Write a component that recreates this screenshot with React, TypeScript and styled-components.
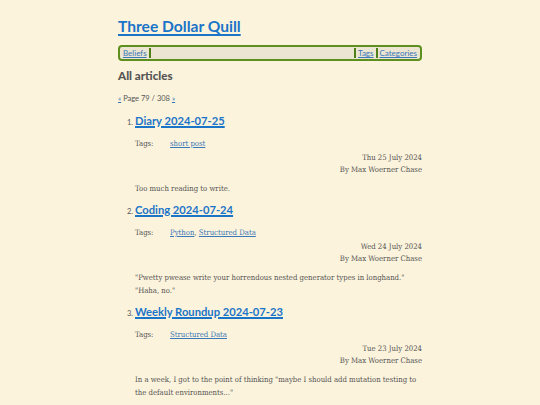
import { FC } from "react";
import styled, { createGlobalStyle } from "styled-components";

const GlobalStyle = createGlobalStyle`
  html, body {
    margin: 0;
    padding: 0;
    background: #fcf3dc;
  }
`;

interface Article {
  title: string;
  tags: string[];
  date: string;
  body: string[];
}

const articles: Article[] = [
  {
    title: "Diary 2024-07-25",
    tags: ["short post"],
    date: "Thu 25 July 2024",
    body: ["Too much reading to write."],
  },
  {
    title: "Coding 2024-07-24",
    tags: ["Python", "Structured Data"],
    date: "Wed 24 July 2024",
    body: [
      "\"Pwetty pwease write your horrendous nested generator types in longhand.\"",
      "\"Haha, no.\"",
    ],
  },
  {
    title: "Weekly Roundup 2024-07-23",
    tags: ["Structured Data"],
    date: "Tue 23 July 2024",
    body: [
      "In a week, I got to the point of thinking \"maybe I should add mutation testing to the default environments...\"",
    ],
  },
];

const App: FC = () => {
  return (
    <>
      <GlobalStyle />
      <Page>
        <SiteTitle href="#">Three Dollar Quill</SiteTitle>
        <Nav>
          <NavLink href="#">Beliefs</NavLink>
          <Sep />
          <Spacer />
          <Sep />
          <NavLink href="#">Tags</NavLink>
          <Sep />
          <NavLink href="#">Categories</NavLink>
        </Nav>
        <Heading>All articles</Heading>
        <Pager>
          <SmallLink href="#">«</SmallLink> Page 79 / 308{" "}
          <SmallLink href="#">»</SmallLink>
        </Pager>
        <List>
          {articles.map((a) => (
            <Item key={a.title}>
              <ItemTitle href="#">{a.title}</ItemTitle>
              <TagRow>
                <TagLabel>Tags:</TagLabel>
                <span>
                  {a.tags.map((t, i) => (
                    <span key={t}>
                      {i > 0 && ", "}
                      <TagLink href="#">{t}</TagLink>
                    </span>
                  ))}
                </span>
              </TagRow>
              <Meta>
                <div>{a.date}</div>
                <div>By Max Woerner Chase</div>
              </Meta>
              <Excerpt>
                {a.body.map((line) => (
                  <div key={line}>{line}</div>
                ))}
              </Excerpt>
            </Item>
          ))}
        </List>
      </Page>
    </>
  );
};

export default App;

const Page = styled.div`
  width: 304px;
  margin: 0 auto;
  padding-top: 16px;
  font-family: "DejaVu Serif Condensed", "DejaVu Serif", serif;
  font-stretch: condensed;
  color: #555;
`;

const SiteTitle = styled.a`
  display: block;
  font-family: Lato, sans-serif;
  font-weight: 700;
  font-size: 15.6px;
  line-height: 20px;
  color: #1a74c8;
  text-decoration: underline;
  text-decoration-thickness: 1.5px;
  text-underline-offset: 2px;
`;

const Nav = styled.nav`
  display: flex;
  align-items: center;
  height: 12px;
  margin-top: 9px;
  padding: 0 2px;
  background: #ebe5d2;
  border: 2px solid #5d8f1e;
  border-radius: 4px;
  font-family: Lato, sans-serif;
  font-size: 8px;
`;

const NavLink = styled.a`
  color: #3a78b8;
  padding: 0 1px;
`;

const Sep = styled.span`
  width: 2px;
  height: 10px;
  background: #4f7f17;
  margin: 0 1px;
`;

const Spacer = styled.span`
  flex: 1;
`;

const Heading = styled.h2`
  margin: 8px 0 0;
  font-family: Lato, sans-serif;
  font-weight: 900;
  font-size: 11.6px;
  line-height: 14px;
  color: #555;
`;

const Pager = styled.div`
  margin-top: 11px;
  font-family: Lato, sans-serif;
  font-size: 7.5px;
  line-height: 10px;
`;

const SmallLink = styled.a`
  color: #3a78b8;
`;

const List = styled.ol`
  margin: 6px 0 0;
  padding-left: 17px;

  li::marker {
    font-family: Lato, sans-serif;
    font-size: 7.5px;
    color: #555;
  }
`;

const Item = styled.li`
  margin-bottom: 4px;
`;

const ItemTitle = styled.a`
  display: inline-block;
  font-family: Lato, sans-serif;
  font-weight: 700;
  font-size: 11.2px;
  line-height: 16px;
  color: #1a74c8;
  text-decoration-thickness: 1.5px;
`;

const TagRow = styled.div`
  display: flex;
  margin-top: 10px;
  font-size: 7.7px;
  line-height: 10px;
`;

const TagLabel = styled.span`
  width: 35px;
`;

const TagLink = styled.a`
  color: #3a78b8;
`;

const Meta = styled.div`
  margin-top: 3px;
  text-align: right;
  font-size: 7.7px;
  line-height: 12px;
`;

const Excerpt = styled.div`
  margin-top: 6px;
  font-size: 7.7px;
  line-height: 13px;
`;
